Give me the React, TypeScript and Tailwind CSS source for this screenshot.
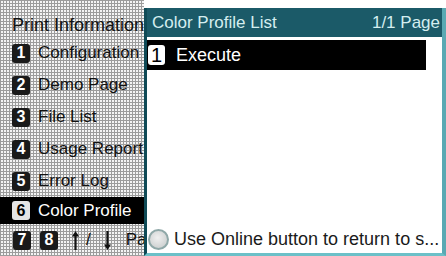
import React from 'react'

const menu = [
  { n: '1', label: 'Configuration' },
  { n: '2', label: 'Demo Page' },
  { n: '3', label: 'File List' },
  { n: '4', label: 'Usage Report' },
  { n: '5', label: 'Error Log' },
]

function NumBox({ n, light }: { n: string; light?: boolean }) {
  return (
    <span
      className={
        light
          ? 'flex h-[19px] w-[18px] shrink-0 items-center justify-center rounded-[3px] bg-[#e4e4e4] text-[16px] font-bold text-black'
          : 'flex h-[19px] w-[18px] shrink-0 items-center justify-center rounded-[3px] bg-[#1a1a1a] text-[16px] font-bold text-white'
      }
    >
      {n}
    </span>
  )
}

function Arrow({ down }: { down?: boolean }) {
  return (
    <svg width="9" height="21" viewBox="0 0 9 21" className={down ? 'rotate-180' : ''}>
      <path d="M4.5 1 L1 6.5 L8 6.5 Z" fill="#111" />
      <rect x="3.4" y="5" width="2.2" height="15" fill="#111" />
    </svg>
  )
}

export default function App() {
  return (
    <div className="flex h-[256px] w-[446px] overflow-hidden bg-white font-['Liberation_Sans',Arial,sans-serif]">
      {/* left menu, partly covered by the dialog */}
      <div className="flex w-[144px] shrink-0 flex-col overflow-hidden bg-[#d0d0d0] bg-[repeating-linear-gradient(0deg,#9c9c9c_0px,#9c9c9c_1px,transparent_1px,transparent_3px),repeating-linear-gradient(90deg,#9c9c9c_0px,#9c9c9c_1px,#f4f4f4_1px,#f4f4f4_3px)] text-[17px] text-[#111]">
        <div className="flex h-[37px] shrink-0 items-center whitespace-nowrap pl-[12px] pt-[13px] text-[18px]">Print Information</div>
        {menu.map((m) => (
          <div key={m.n} className="flex h-[32px] shrink-0 items-center gap-[8px] whitespace-nowrap pl-[12px]">
            <NumBox n={m.n} />
            <span>{m.label}</span>
          </div>
        ))}
        <div className="flex h-[27px] shrink-0 items-center gap-[8px] whitespace-nowrap bg-black pl-[12px] text-white">
          <NumBox n="6" light />
          <span>Color Profile</span>
        </div>
        <div className="flex h-[32px] shrink-0 items-center whitespace-nowrap pl-[13px]">
          <NumBox n="7" />
          <span className="ml-[9px]">
            <NumBox n="8" />
          </span>
          <span className="ml-[13px] flex items-center">
            <Arrow />
          </span>
          <span className="ml-[6px]">/</span>
          <span className="ml-[12px] flex items-center">
            <Arrow down />
          </span>
          <span className="ml-[14px]">Page</span>
        </div>
      </div>

      {/* dialog */}
      <div className="mt-[8px] flex flex-1 flex-col border-b-[3px] border-l-[3px] border-r-[4px] border-b-[#6cc0c8] border-l-[#0f4a56] border-r-[#5aa9b3] bg-white">
        <div className="flex h-[29px] shrink-0 items-center justify-between bg-[#1b5a68] pl-[5px] pr-[2px] text-[17px] text-[#d4eef0]">
          <span>Color Profile List</span>
          <span>1/1 Page</span>
        </div>
        <div className="mt-[3px] mr-[16px] flex h-[30px] shrink-0 items-center gap-[11px] bg-black pl-[1px] text-[18px] text-white">
          <span className="flex h-[20px] w-[17px] items-center justify-center rounded-[3px] bg-white text-[20px] text-black">1</span>
          <span>Execute</span>
        </div>
        <div className="flex-1" />
        <div className="flex h-[26px] shrink-0 items-center gap-[5px] pb-[1px] pl-[1px] text-[18px] text-[#1a1a1a]">
          <span className="h-[21px] w-[21px] shrink-0 rounded-full border-[2px] border-[#8fa8a8] bg-[radial-gradient(circle_at_45%_40%,#f0f0f0,#c4c8c8)]" />
          <span className="whitespace-nowrap">Use Online button to return to s...</span>
        </div>
      </div>
    </div>
  )
}
